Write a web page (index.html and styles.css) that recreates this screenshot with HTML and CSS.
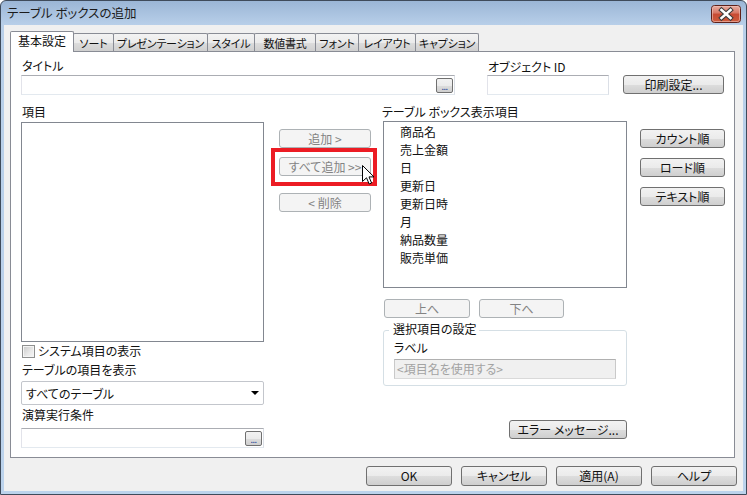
FILE: index.html
```html
<!DOCTYPE html>
<html lang="ja">
<head>
<meta charset="utf-8">
<title>テーブル ボックスの追加</title>
<link rel="stylesheet" href="styles.css">
</head>
<body>
<div class="window">
  <div class="titlebar">
    <span class="title">テーブル ボックスの追加</span>
    <span class="close">
      <svg width="30" height="18" viewBox="0 0 30 18">
        <defs>
          <linearGradient id="cg" x1="0" y1="0" x2="0" y2="1">
            <stop offset="0" stop-color="#e9b1a6"/>
            <stop offset="0.45" stop-color="#d77563"/>
            <stop offset="0.5" stop-color="#c74a33"/>
            <stop offset="1" stop-color="#cf5d3e"/>
          </linearGradient>
        </defs>
        <rect x="0.5" y="0.5" width="29" height="17" rx="3" fill="url(#cg)" stroke="#5e211a"/>
        <rect x="1.5" y="1.5" width="27" height="15" rx="2" fill="none" stroke="#f0c4ba" stroke-opacity="0.6"/>
        <path d="M10.5 5 L19.5 13 M19.5 5 L10.5 13" stroke="#3a3a3a" stroke-width="4.6" stroke-linecap="square"/>
        <path d="M10.5 5 L19.5 13 M19.5 5 L10.5 13" stroke="#ffffff" stroke-width="2.6" stroke-linecap="square"/>
      </svg>
    </span>
  </div>
  <div class="client">
    <div class="tabs">
      <div class="tab active t1">基本設定</div>
      <div class="tab t2">ソート</div>
      <div class="tab t3">プレゼンテーション</div>
      <div class="tab t4">スタイル</div>
      <div class="tab t5">数値書式</div>
      <div class="tab t6">フォント</div>
      <div class="tab t7">レイアウト</div>
      <div class="tab t8">キャプション</div>
    </div>
    <div class="panel">
      <div class="row1">
        <div class="fld-title">
          <div class="lbl">タイトル</div>
          <div class="textbox with-dots"><span class="dots">...</span></div>
        </div>
        <div class="fld-objid">
          <div class="lbl">オブジェクト ID</div>
          <div class="textbox"></div>
        </div>
        <div class="btn btn-print">印刷設定...</div>
      </div>
      <div class="main">
        <div class="col-left">
          <div class="lbl">項目</div>
          <div class="listbox list-left"></div>
          <div class="chkrow"><span class="chk"></span><span>システム項目の表示</span></div>
          <div class="lbl lbl-tbl">テーブルの項目を表示</div>
          <div class="combo"><span>すべてのテーブル</span><span class="arrow"></span></div>
          <div class="lbl lbl-calc">演算実行条件</div>
          <div class="textbox with-dots calc"><span class="dots">...</span></div>
        </div>
        <div class="col-mid">
          <div class="btn disabled">追加 &gt;</div>
          <div class="hl">
            <div class="btn disabled">すべて追加 &gt;&gt;</div>
            <svg class="cursor" width="13" height="20" viewBox="0 0 13 20">
              <path d="M0.5 0.5 L0.5 16.5 L4.5 12.8 L7.2 19 L9.6 18 L7 11.9 L12 11.9 Z" fill="#ffffff" stroke="#000000" stroke-width="1" stroke-linejoin="miter"/>
            </svg>
          </div>
          <div class="btn disabled btn-del">&lt; 削除</div>
        </div>
        <div class="col-right">
          <div class="lbl lbl-r">テーブル ボックス表示項目</div>
          <ul class="listbox list-right">
            <li>商品名</li>
            <li>売上金額</li>
            <li>日</li>
            <li>更新日</li>
            <li>更新日時</li>
            <li>月</li>
            <li>納品数量</li>
            <li>販売単価</li>
          </ul>
          <div class="updown">
            <div class="btn disabled btn-up">上へ</div>
            <div class="btn disabled btn-down">下へ</div>
          </div>
          <div class="group">
            <div class="group-title">選択項目の設定</div>
            <div class="lbl group-lbl">ラベル</div>
            <div class="textbox dis-input">&lt;項目名を使用する&gt;</div>
          </div>
          <div class="btn btn-err">エラー メッセージ...</div>
        </div>
        <div class="col-btns">
          <div class="btn">カウント順</div>
          <div class="btn">ロード順</div>
          <div class="btn">テキスト順</div>
        </div>
      </div>
    </div>
    <div class="footer">
      <div class="btn fbtn">OK</div>
      <div class="btn fbtn">キャンセル</div>
      <div class="btn fbtn">適用(A)</div>
      <div class="btn fbtn">ヘルプ</div>
    </div>
  </div>
</div>
</body>
</html>
```
FILE: styles.css
```css
* { box-sizing: border-box; }
html, body { margin: 0; padding: 0; }
body {
  width: 747px;
  height: 495px;
  overflow: hidden;
  background: #ffffff;
  font-family: "Noto Sans CJK JP", "Noto Sans", sans-serif;
  font-size: 12px;
  color: #111;
  font-feature-settings: "palt";
}
.window {
  width: 747px;
  height: 495px;
  border: 1px solid #3f4b5b;
  border-radius: 6px 6px 0 0;
  background: linear-gradient(#9bb6d6 0px, #b8cfe9 24px, #bcd3ec 100%);
  display: flex;
  flex-direction: column;
}
.titlebar {
  height: 24px;
  display: flex;
  justify-content: space-between;
  align-items: flex-start;
  padding: 0 5px 0 6px;
}
.title {
  font-size: 12.5px;
  line-height: 16px;
  margin-top: 4px;
  color: #1b1b1b;
}
.close { display: block; width: 30px; height: 18px; margin-top: 4px; }
.close svg { display: block; }
.client {
  flex: 1;
  margin: 0 3px 3px 3px;
  background: #f0f0f0;
  display: flex;
  flex-direction: column;
}
.tabs {
  display: flex;
  align-items: flex-end;
  height: 26px;
  padding: 6px 0 0 6px;
}
.tab {
  height: 18px;
  border: 1px solid #898c95;
  border-bottom: none;
  margin-left: -1px;
  border-radius: 2px 2px 0 0;
  background: linear-gradient(#f3f3f3 0%, #ebebeb 50%, #dddddd 51%, #cfcfcf 100%);
  display: flex;
  align-items: center;
  justify-content: center;
  font-size: 11px;
  line-height: 16px;
  white-space: nowrap;
  letter-spacing: -0.2px;
  overflow: hidden;
}
.tab.active {
  height: 21px;
  margin-left: 0;
  margin-bottom: -1px;
  background: #ffffff;
  position: relative;
  z-index: 1;
  padding-bottom: 2px;
  font-size: 12px;
  letter-spacing: 0;
}
.t1 { width: 64px; }
.t2 { width: 41px; }
.t3 { width: 95px; }
.t4 { width: 48px; }
.t5 { width: 62px; }
.t6 { width: 44px; }
.t7 { width: 58px; }
.t8 { width: 64px; }

.panel {
  margin: 0 8px 0 6px;
  height: 407px;
  border: 1px solid #898c95;
  background: #ffffff;
  padding: 6px 0 0 10px;
}
.lbl { line-height: 16px; height: 16px; padding-left: 1px; white-space: nowrap; }
.row1 { display: flex; align-items: flex-end; }
.fld-title { width: 434px; }
.fld-objid { width: 122px; margin-left: 32px; }
.fld-objid .textbox { margin-top: 0; }
.btn-print { width: 101px; margin-left: 14px; margin-bottom: 1px; }
.textbox {
  height: 20px;
  margin-top: 1px;
  background: #fff;
  border: 1px solid;
  border-color: #abadb3 #dbdfe6 #e3e9ef #e2e3ea;
}
.with-dots { display: flex; justify-content: flex-end; align-items: center; padding-right: 1px; }
.dots {
  width: 17px;
  height: 15px;
  border: 1px solid #707070;
  border-radius: 2px;
  background: linear-gradient(#f2f2f2 0%, #ebebeb 50%, #dddddd 51%, #cfcfcf 100%);
  font-size: 9px;
  line-height: 15px;
  text-align: center;
  color: #1c3f94;
  letter-spacing: -0.5px;
}

.btn {
  height: 19px;
  border: 1px solid #707070;
  border-radius: 3px;
  background: linear-gradient(#f2f2f2 0%, #ebebeb 50%, #dddddd 51%, #cfcfcf 100%);
  display: flex;
  align-items: center;
  justify-content: center;
  line-height: 16px;
  white-space: nowrap;
}
.btn.disabled {
  border-color: #adb2b5;
  background: #f4f4f4;
  color: #838383;
}

.main { display: flex; margin-top: 9px; }
.col-left { width: 243px; display: flex; flex-direction: column; }
.listbox {
  border: 1px solid #828790;
  background: #fff;
  margin: 0;
}
.list-left { height: 220px; margin-top: 2px; }
.chkrow { display: flex; align-items: center; height: 14px; margin-top: 2px; line-height: 14px; }
.chk {
  width: 13px;
  height: 13px;
  margin: 0 3px 0 1px;
  border: 1px solid #8e8f8f;
  background: linear-gradient(135deg, #c9c9c9 0%, #e9e9e9 60%, #f6f6f6 100%);
  box-shadow: inset 0 0 0 1px #f4f4f4;
}
.lbl-tbl { margin-top: 4px; }
.combo {
  height: 24px;
  margin-top: 3px;
  border: 1px solid #c3c6cc;
  border-radius: 2px;
  background: #fff;
  display: flex;
  align-items: center;
  justify-content: space-between;
  padding: 0 4px 0 4px;
}
.arrow {
  width: 0;
  height: 0;
  border-left: 4px solid transparent;
  border-right: 4px solid transparent;
  border-top: 4px solid #000;
}
.lbl-calc { margin-top: 2px; }
.calc { margin-top: 5px; }

.col-mid { width: 92px; margin-left: 15px; padding-top: 25px; }
.hl { position: relative; margin-top: 9px; }
.hl::after {
  content: "";
  position: absolute;
  left: -8px;
  right: -6px;
  top: -9px;
  bottom: -10px;
  border: 4px solid #ec1c24;
}
.cursor { position: absolute; left: 83px; top: 8px; z-index: 2; }
.btn-del { margin-top: 17px; }

.col-right { width: 244px; margin-left: 12px; display: flex; flex-direction: column; }
.lbl-r { padding-left: 0; margin-left: -1px; }
.list-right {
  height: 167px;
  margin-top: 1px;
  list-style: none;
  padding: 1px 0 0 16px;
}
.list-right li { line-height: 18px; height: 18px; }
.updown { display: flex; margin-top: 11px; padding-left: 1px; }
.btn-up { width: 86px; }
.btn-down { width: 85px; margin-left: 9px; }
.group {
  margin-top: 12px;
  height: 56px;
  border: 1px solid #d5dfe5;
  border-radius: 3px;
  padding: 0 0 0 10px;
  display: flex;
  flex-direction: column;
  align-items: flex-start;
}
.group-title {
  margin-top: -10px;
  margin-left: -5px;
  padding: 0 2px 0 4px;
  background: #fff;
  line-height: 16px;
  height: 16px;
  white-space: nowrap;
}
.group-lbl { margin-top: 3px; padding-left: 0; }
.dis-input {
  width: 222px;
  margin-top: 3px;
  background: #f0f0f0;
  border-color: #b0b0b0 #c9c9c9 #d9d9d9 #c9c9c9;
  color: #a3a3a3;
  line-height: 18px;
  padding-left: 2px;
  white-space: nowrap;
}
.btn-err { width: 118px; margin-top: 34px; align-self: flex-end; }

.col-btns { width: 85px; margin-left: 13px; padding-top: 25px; display: flex; flex-direction: column; gap: 10px; }

.footer {
  display: flex;
  justify-content: flex-end;
  gap: 9px;
  margin-top: 8px;
  padding-right: 6px;
}
.fbtn { width: 86px; height: 20px; }
```
